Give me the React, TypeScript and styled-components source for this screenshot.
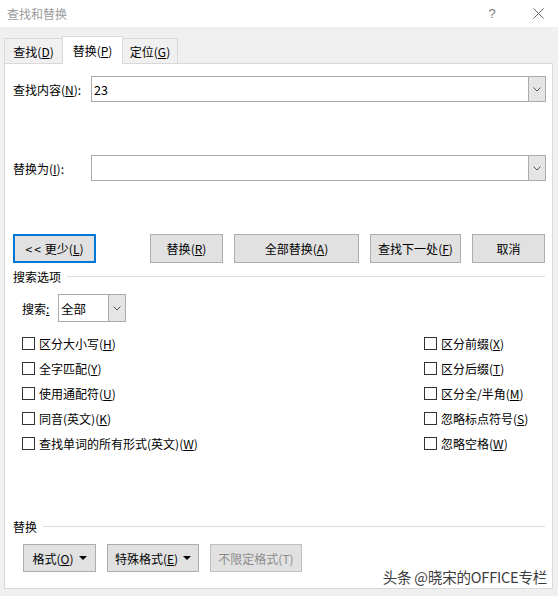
import React from 'react'
import styled, { createGlobalStyle } from 'styled-components'

const GlobalStyle = createGlobalStyle`
  html, body {
    margin: 0;
    padding: 0;
    background: #f0f0f0;
  }
  body {
    font-family: "Noto Sans CJK SC", "Microsoft YaHei", sans-serif;
    font-size: 12px;
    color: #000;
  }
  * {
    box-sizing: border-box;
  }
`

const Window = styled.div`
  position: relative;
  display: flex;
  flex-direction: column;
  width: 558px;
  height: 596px;
  overflow: hidden;
  background: #f0f0f0;
`

const TitleBar = styled.div`
  display: flex;
  align-items: center;
  height: 27px;
  padding-left: 7px;
  background: #fff;
`

const Title = styled.span`
  color: #9a9a9a;
  font-size: 12px;
`

const Controls = styled.div`
  display: flex;
  gap: 16px;
  margin-left: auto;
  padding-right: 5px;
`

const Control = styled.div`
  display: flex;
  justify-content: center;
  align-items: center;
  width: 30px;
  height: 27px;
  color: #777;
  font-size: 13px;
  font-family: "Liberation Sans", sans-serif;
`

const Body = styled.div`
  display: flex;
  flex-direction: column;
  flex: 1;
  padding: 0 5px 7px 4px;
`

const TabRow = styled.div`
  display: flex;
  align-items: flex-end;
  height: 36px;
`

const Tab = styled.div<{ $active?: boolean; $w: number; $first?: boolean }>`
  position: relative;
  z-index: ${({ $active }) => ($active ? 2 : 1)};
  display: flex;
  justify-content: center;
  align-items: center;
  width: ${({ $w }) => $w}px;
  height: ${({ $active }) => ($active ? 28 : 25)}px;
  margin-left: ${({ $first }) => ($first ? 0 : -1)}px;
  margin-bottom: ${({ $active }) => ($active ? -1 : 0)}px;
  padding-bottom: ${({ $active }) => ($active ? 1 : 0)}px;
  border: 1px solid #d9d9d9;
  border-bottom: none;
  background: ${({ $active }) => ($active ? '#fff' : '#f0f0f0')};
`

const Panel = styled.div`
  display: flex;
  flex-direction: column;
  flex: 1;
  padding: 12px 6px 16px 8px;
  border: 1px solid #d9d9d9;
  background: #fff;
`

const FieldRow = styled.div<{ $top: number }>`
  display: flex;
  align-items: center;
  margin-top: ${({ $top }) => $top}px;
`

const FieldLabel = styled.span<{ $w: number }>`
  flex: none;
  width: ${({ $w }) => $w}px;
`

const Combo = styled.div<{ $w?: number; $h: number }>`
  display: flex;
  flex: ${({ $w }) => ($w ? 'none' : '1')};
  width: ${({ $w }) => ($w ? `${$w}px` : 'auto')};
  height: ${({ $h }) => $h}px;
  border: 1px solid #ababab;
  background: #fff;
`

const ComboText = styled.div`
  display: flex;
  align-items: center;
  flex: 1;
  padding-left: 2px;
  font-size: 12.5px;
`

const ComboButton = styled.div`
  display: flex;
  justify-content: center;
  align-items: center;
  width: 17px;
  border-left: 1px solid #ababab;
  background: #e5e5e5;
`

const ButtonRow = styled.div`
  display: flex;
  height: 29px;
  margin-top: 53px;
`

const ButtonGroup = styled.div<{ $gap: number; $indent?: number }>`
  display: flex;
  gap: ${({ $gap }) => $gap}px;
  margin-left: ${({ $indent }) => ($indent === undefined ? 'auto' : `${$indent}px`)};
  margin-right: ${({ $indent }) => ($indent === undefined ? 1 : 0)}px;
`

const Button = styled.div<{ $w: number; $default?: boolean; $disabled?: boolean }>`
  display: flex;
  justify-content: center;
  align-items: center;
  gap: 5px;
  width: ${({ $w }) => $w}px;
  height: 100%;
  border: ${({ $default, $disabled }) =>
    $default ? '2px solid #0078d7' : $disabled ? '1px solid #bfbfbf' : '1px solid #adadad'};
  background: #e1e1e1;
  color: ${({ $disabled }) => ($disabled ? '#8c8c8c' : '#000')};
  white-space: nowrap;
`

const Arrows = styled.span`
  letter-spacing: 2px;
  margin-right: 2px;
`

const SectionHeader = styled.div<{ $top: number }>`
  display: flex;
  align-items: center;
  height: 16px;
  margin-top: ${({ $top }) => $top}px;
`

const SectionLine = styled.div`
  flex: 1;
  height: 1px;
  margin: 0 1px 0 6px;
  background: #dcdcdc;
`

const SearchRow = styled.div`
  display: flex;
  align-items: center;
  margin-top: 10px;
  padding-left: 9px;
`

const Options = styled.div`
  display: flex;
  margin-top: 9px;
`

const OptionColumn = styled.div<{ $right?: boolean }>`
  display: flex;
  flex-direction: column;
  width: ${({ $right }) => ($right ? '122px' : 'auto')};
  margin-left: ${({ $right }) => ($right ? 'auto' : '9px')};
`

const CheckRow = styled.div`
  display: flex;
  align-items: center;
  gap: 4px;
  height: 25px;
  white-space: nowrap;
`

const Box = styled.span`
  flex: none;
  width: 13px;
  height: 13px;
  border: 1px solid #333;
  background: #fff;
`

const ReplaceSection = styled.div`
  display: flex;
  flex-direction: column;
  margin-top: auto;
`

const BottomButtons = styled.div`
  display: flex;
  height: 28px;
  margin-top: 10px;
`

const Watermark = styled.div`
  position: absolute;
  right: 11px;
  bottom: 9px;
  color: #3c3c3c;
  font-size: 14.5px;
  letter-spacing: -0.2px;
  text-shadow: 0 0 2px #fff, 0 0 2px #fff;
`

const U = styled.u`
  text-underline-offset: 1px;
`

const Chevron = () => (
  <svg width="8" height="5" viewBox="0 0 8 5">
    <polyline points="0.5,0.5 4,4 7.5,0.5" fill="none" stroke="#555" strokeWidth="1" />
  </svg>
)

const Caret = () => (
  <svg width="8" height="4" viewBox="0 0 8 4">
    <polygon points="0,0 8,0 4,4" fill="#000" />
  </svg>
)

const Close = () => (
  <svg width="11" height="11" viewBox="0 0 11 11">
    <path d="M0.5 0.5 L10.5 10.5 M10.5 0.5 L0.5 10.5" stroke="#666" strokeWidth="1" />
  </svg>
)

const Key: React.FC<{ k: string }> = ({ k }) => (
  <>
    (<U>{k}</U>)
  </>
)

const leftOptions: [string, string][] = [
  ['区分大小写', 'H'],
  ['全字匹配', 'Y'],
  ['使用通配符', 'U'],
  ['同音(英文)', 'K'],
  ['查找单词的所有形式(英文)', 'W']
]

const rightOptions: [string, string][] = [
  ['区分前缀', 'X'],
  ['区分后缀', 'T'],
  ['区分全/半角', 'M'],
  ['忽略标点符号', 'S'],
  ['忽略空格', 'W']
]

export default function App() {
  return (
    <Window>
      <GlobalStyle />
      <TitleBar>
        <Title>查找和替换</Title>
        <Controls>
          <Control>?</Control>
          <Control>
            <Close />
          </Control>
        </Controls>
      </TitleBar>

      <Body>
        <TabRow>
          <Tab $w={59} $first>
            <span>
              查找<Key k="D" />
            </span>
          </Tab>
          <Tab $w={61} $active>
            <span>
              替换<Key k="P" />
            </span>
          </Tab>
          <Tab $w={56}>
            <span>
              定位<Key k="G" />
            </span>
          </Tab>
        </TabRow>

        <Panel>
          <FieldRow $top={0}>
            <FieldLabel $w={78}>
              查找内容<Key k="N" />:
            </FieldLabel>
            <Combo $h={26}>
              <ComboText>23</ComboText>
              <ComboButton>
                <Chevron />
              </ComboButton>
            </Combo>
          </FieldRow>

          <FieldRow $top={53}>
            <FieldLabel $w={78}>
              替换为<Key k="I" />:
            </FieldLabel>
            <Combo $h={26}>
              <ComboText />
              <ComboButton>
                <Chevron />
              </ComboButton>
            </Combo>
          </FieldRow>

          <ButtonRow>
            <Button $w={83} $default>
              <span>
                <Arrows>&lt;&lt;</Arrows>更少<Key k="L" />
              </span>
            </Button>
            <ButtonGroup $gap={11}>
              <Button $w={73}>
                <span>
                  替换<Key k="R" />
                </span>
              </Button>
              <Button $w={125}>
                <span>
                  全部替换<Key k="A" />
                </span>
              </Button>
              <Button $w={91}>
                <span>
                  查找下一处<Key k="F" />
                </span>
              </Button>
              <Button $w={73}>取消</Button>
            </ButtonGroup>
          </ButtonRow>

          <SectionHeader $top={5}>
            <span>搜索选项</span>
            <SectionLine />
          </SectionHeader>

          <SearchRow>
            <FieldLabel $w={36}>
              搜索<U>:</U>
            </FieldLabel>
            <Combo $w={68} $h={28}>
              <ComboText>全部</ComboText>
              <ComboButton>
                <Chevron />
              </ComboButton>
            </Combo>
          </SearchRow>

          <Options>
            <OptionColumn>
              {leftOptions.map(([label, k]) => (
                <CheckRow key={label}>
                  <Box />
                  <span>
                    {label}
                    <Key k={k} />
                  </span>
                </CheckRow>
              ))}
            </OptionColumn>
            <OptionColumn $right>
              {rightOptions.map(([label, k]) => (
                <CheckRow key={label}>
                  <Box />
                  <span>
                    {label}
                    <Key k={k} />
                  </span>
                </CheckRow>
              ))}
            </OptionColumn>
          </Options>

          <ReplaceSection>
            <SectionHeader $top={0}>
              <span>替换</span>
              <SectionLine />
            </SectionHeader>
            <BottomButtons>
              <ButtonGroup $gap={11} $indent={10}>
                <Button $w={73}>
                  <span>
                    格式<Key k="O" />
                  </span>
                  <Caret />
                </Button>
                <Button $w={92}>
                  <span>
                    特殊格式<Key k="E" />
                  </span>
                  <Caret />
                </Button>
                <Button $w={92} $disabled>
                  不限定格式(T)
                </Button>
              </ButtonGroup>
            </BottomButtons>
          </ReplaceSection>
        </Panel>
      </Body>

      <Watermark>头条 @晓宋的OFFICE专栏</Watermark>
    </Window>
  )
}
